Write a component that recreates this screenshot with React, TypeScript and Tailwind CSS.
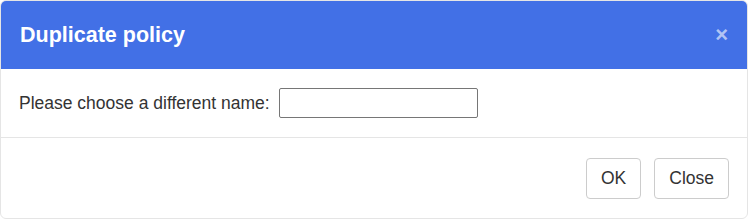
import React from "react";

export default function App() {
  return (
    <div className="w-[748px] h-[219px] bg-white" style={{ fontFamily: '"Liberation Sans", Arial, sans-serif' }}>
      <div className="flex h-[219px] flex-col overflow-hidden rounded-[6px] border border-[#e5e5e5] bg-white">
        {/* Header */}
        <div className="flex h-[68px] shrink-0 items-center justify-between bg-[#4270e6] pl-[19px] pr-[19px]">
          <span className="text-[21.5px] font-bold text-white">Duplicate policy</span>
          <button className="text-[22px] font-bold leading-none text-white/60">&times;</button>
        </div>

        {/* Body */}
        <div className="flex h-[69px] shrink-0 items-center gap-[9px] border-b border-[#e5e5e5] px-[18px]">
          <label className="text-[17.5px] text-[#333]">Please choose a different name:</label>
          <input
            type="text"
            className="h-[30px] w-[199px] rounded-[2px] border border-[#767676] bg-white px-1 outline-none"
          />
        </div>

        {/* Footer */}
        <div className="flex flex-1 items-start justify-end gap-[13px] px-[18px] pt-[20px]">
          <button className="h-[41px] rounded-[4px] border border-[#cccccc] bg-white px-[14px] text-[17.5px] text-[#333]">
            OK
          </button>
          <button className="h-[41px] rounded-[4px] border border-[#cccccc] bg-white px-[14px] text-[17.5px] text-[#333]">
            Close
          </button>
        </div>
      </div>
    </div>
  );
}
